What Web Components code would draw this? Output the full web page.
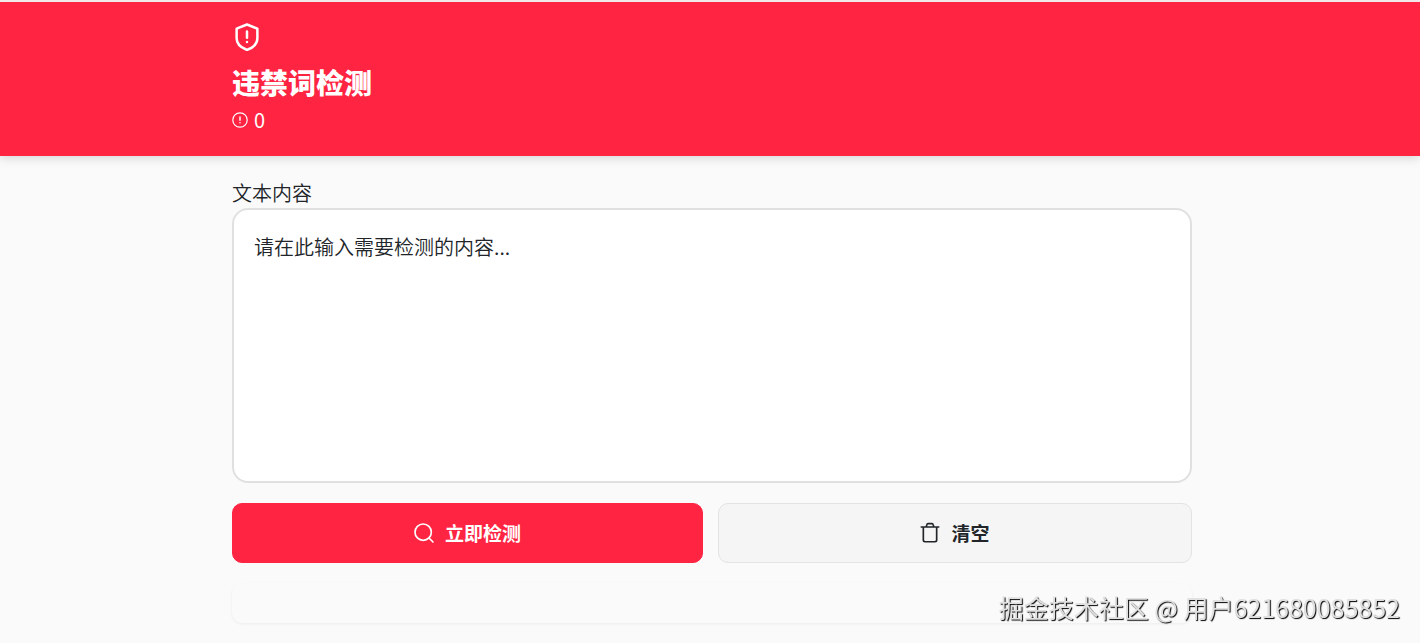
<!DOCTYPE html>
<html lang="zh-CN">
<head>
<meta charset="utf-8">
<title>违禁词检测</title>
<style>
body{margin:0;min-height:100vh;background:#fafafa;color:#212529;font:20px/30px "Noto Sans CJK SC",sans-serif;overflow-x:hidden}
</style>
</head>
<body>
<word-checker></word-checker>
<script>
const define = (name, html, setup) => customElements.define(name, class extends HTMLElement {
  constructor(){
    super();
    const t = document.createElement('template');
    t.innerHTML = html;
    this.attachShadow({mode:'open'}).append(t.content.cloneNode(true));
    if (setup) setup(this.shadowRoot, this);
  }
});

const shapes = {
  shield:'<path d="M20.300 13c0 4.500-3.200 7.300-7.600 9a2 2 0 0 1-1.400 0C6.900 20.300 3.700 17.500 3.700 13V5.300L12 2l8.300 3.300z"/><path d="M12 7.500v5M12 16h.01"/>',
  alert:'<circle cx="12" cy="12" r="10.800"/><path d="M12 7.500v5M12 16h.01" stroke-width="2.200"/>',
  search:'<circle cx="11" cy="11" r="9.800"/><path d="m18 18 4.800 4.800"/>',
  trash:'<path d="M1.500 4.800h21M4 4.800v15.700a2 2 0 0 0 2 2h12a2 2 0 0 0 2-2V4.800M7.500 4.800l.700-2.800A1.500 1.500 0 0 1 9.700.800h4.600A1.500 1.500 0 0 1 15.800 2l.700 2.800"/>'
};
define('line-icon', `<style>
:host{display:block;flex:none;width:20px;height:20px}
svg{display:block;width:100%;height:100%;fill:none;stroke:currentColor;stroke-linecap:round;stroke-linejoin:round;overflow:visible}
</style><svg viewBox="0 0 24 24" aria-hidden="true"></svg>`, (root, host) => {
  const svg = root.querySelector('svg');
  svg.innerHTML = shapes[host.getAttribute('name')];
  svg.setAttribute('stroke-width', host.getAttribute('weight') || '2');
});

define('app-header', `<style>
:host{display:block;background:#ff2442;color:#fff;border-top:2px solid #f1e8ea;box-shadow:0 2px 10px rgba(0,0,0,.15)}
.inner{max-width:960px;margin:0 auto;padding:20px 0 20px 4px}
.shield{width:30px;height:30px}
h1{margin:10px 0 0;font-size:28px;line-height:40px;font-weight:900}
.count{display:flex;align-items:center;gap:6px;margin-top:2px;line-height:32px}
.count line-icon{width:16px;height:16px}
</style><div class="inner"><line-icon class="shield" name="shield"></line-icon><h1><slot></slot></h1><div class="count"><line-icon name="alert" weight="1.8"></line-icon><span>0</span></div></div>`);

define('text-field', `<style>
:host{display:block;font-weight:350}
label{display:block;line-height:30px}
textarea{display:block;box-sizing:border-box;width:100%;height:275px;padding:20px;border:2px solid #e0e0e0;border-radius:16px;background:#fff;color:#212529;font:inherit;line-height:34px;resize:none;outline:0}
textarea::placeholder{color:#212529;opacity:1}
</style><label for="content">文本内容</label><textarea id="content" placeholder="请在此输入需要检测的内容..."></textarea>`);

define('action-button', `<style>
:host{display:block}
button{display:flex;align-items:center;justify-content:center;gap:11px;box-sizing:border-box;width:100%;height:60px;margin:0;padding:0;border:1px solid #e3e3e3;border-radius:10px;background:#f5f5f5;color:#212529;font:inherit;font-size:19px;font-weight:700}
:host([primary]) button{border-color:#ff2442;background:#ff2442;color:#fff}
</style><button type="button"><slot name="icon"></slot><span><slot></slot></span></button>`);

define('result-panel', `<style>
:host{display:block;box-sizing:border-box;height:40px;border-radius:10px;background:#fafafa;box-shadow:0 1px 3px rgba(0,0,0,.06)}
</style>`);

define('water-mark', `<style>
:host{position:fixed;right:20px;bottom:18px;color:#e0e0e0;font-size:25px;line-height:36px;white-space:nowrap;text-shadow:1px 1px 1px #000}
</style><slot></slot>`);

define('word-checker', `<style>
:host{display:block}
main{max-width:960px;margin:0 auto;padding:22px 0 18px 4px}
text-field{margin-bottom:20px}
.actions{display:grid;grid-template-columns:157fr 158fr;gap:15px;margin-bottom:20px}
</style>
<app-header>违禁词检测</app-header>
<main>
<text-field></text-field>
<div class="actions">
<action-button primary><line-icon slot="icon" name="search" weight="2"></line-icon>立即检测</action-button>
<action-button><line-icon slot="icon" name="trash" weight="2"></line-icon>清空</action-button>
</div>
<result-panel></result-panel>
</main>
<water-mark>掘金技术社区 @ 用户621680085852</water-mark>`);
</script>
</body>
</html>
